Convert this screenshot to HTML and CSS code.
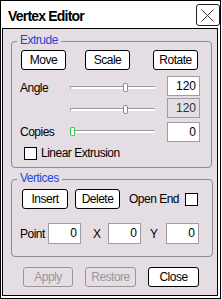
FILE: index.html
```html
<!DOCTYPE html>
<html>
<head>
<meta charset="utf-8">
<link rel="stylesheet" href="styles.css">
</head>
<body>
<div class="win">
  <div class="titlebar">
    <span class="title">Vertex Editor</span>
    <div class="xbtn">
      <svg width="22" height="20" viewBox="0 0 22 20"><path d="M4.5 4.5 L16.5 16.5 M16.5 4.5 L4.5 16.5" stroke="#333" stroke-width="1" fill="none"/></svg>
    </div>
  </div>
  <div class="client">
    <div class="group g1">
      <span class="legend">Extrude</span>
      <div class="btnrow">
        <div class="btn b-move">Move</div>
        <div class="btn b-scale">Scale</div>
        <div class="btn b-rotate">Rotate</div>
      </div>
      <div class="row r1">
        <span class="lbl">Angle</span>
        <div class="slider"><div class="track"></div><div class="thumb green" style="left:53px"></div></div>
        <div class="tb">120</div>
      </div>
      <div class="row r2">
        <span class="lbl"></span>
        <div class="slider"><div class="track"></div><div class="thumb" style="left:53px"></div></div>
        <div class="tb disabled">120</div>
      </div>
      <div class="row r3">
        <span class="lbl">Copies</span>
        <div class="slider"><div class="track"></div><div class="thumb green" style="left:0px"></div></div>
        <div class="tb">0</div>
      </div>
      <div class="chkrow">
        <div class="chk"></div>
        <span class="chklbl">Linear Extrusion</span>
      </div>
    </div>
    <div class="group g2">
      <span class="legend">Vertices</span>
      <div class="btnrow2">
        <div class="btn b-insert">Insert</div>
        <div class="btn b-delete">Delete</div>
        <span class="openend">Open End</span>
        <div class="chk"></div>
      </div>
      <div class="pointrow">
        <span class="plbl">Point</span>
        <div class="tb small">0</div>
        <span class="xlbl">X</span>
        <div class="tb small">0</div>
        <span class="ylbl">Y</span>
        <div class="tb small">0</div>
      </div>
    </div>
    <div class="footer">
      <div class="btn fbtn disabled">Apply</div>
      <div class="btn fbtn disabled">Restore</div>
      <div class="btn fbtn">Close</div>
    </div>
  </div>
</div>
</body>
</html>
```
FILE: styles.css
```css
html, body {
  margin: 0;
  padding: 0;
  background: #ffffff;
}
body {
  font-family: "Liberation Sans", Arial, sans-serif;
  font-size: 12px;
  letter-spacing: -0.5px;
  color: #000;
}
.win {
  width: 219px;
  height: 297px;
  border: 1px solid #000;
  background: #fff;
  display: flex;
  flex-direction: column;
}
.titlebar {
  height: 27px;
  display: flex;
  align-items: flex-start;
}
.title {
  font-size: 14px;
  font-weight: bold;
  letter-spacing: -0.8px;
  line-height: 20px;
  padding-top: 5px;
  padding-left: 7px;
}
.xbtn {
  margin-left: auto;
  margin-top: 3px;
  width: 22px;
  height: 20px;
  border: 1px solid #222;
  border-radius: 3px;
  background: #fff;
}
.xbtn svg { display: block; }
.client {
  margin: 0 2px 2px 1px;
  height: 266px;
  border: 1px solid #000;
  background: #e4dde4;
  display: flex;
  flex-direction: column;
}
.group {
  position: relative;
  border: 1px solid #8e8a8e;
  border-radius: 4px;
}
.g1 {
  margin: 12px 5px 0 8px;
  padding: 8px 11px 7px 8px;
}
.g2 {
  margin: 11px 4px 0 8px;
  padding: 9px 11px 12px 10px;
}
.legend {
  position: absolute;
  top: -8px;
  left: 5px;
  padding: 0 3px 0 3px;
  line-height: 13px;
  color: #1f45d6;
  background: #e4dde4;
}
.btn {
  box-sizing: border-box;
  height: 20px;
  border: 1px solid #000;
  border-radius: 3px;
  background: #fff;
  display: flex;
  align-items: center;
  justify-content: center;
  line-height: 13px;
}
.btn.disabled {
  border-color: #9a969a;
  color: #9a969a;
  background: #e4dde4;
}
.btnrow {
  display: flex;
  height: 20px;
}
.b-move { width: 45px; margin-left: 1px; }
.b-scale { width: 45px; margin-left: 19px; }
.b-rotate { width: 45px; margin-left: 23px; }
.row {
  display: flex;
  align-items: flex-start;
  height: 20px;
}
.r1 { margin-top: 6px; }
.r2 { margin-top: 2px; }
.r3 { margin-top: 4px; }
.lbl {
  width: 50px;
  line-height: 13px;
}
.r1 .lbl { margin-top: 6px; }
.r3 .lbl { margin-top: 4px; }
.slider {
  position: relative;
  width: 85px;
  height: 9px;
}
.r1 .slider { margin-top: 7px; }
.r2 .slider { margin-top: 7px; }
.r3 .slider { margin-top: 5px; }
.track {
  margin-top: 3px;
  height: 2px;
  background: #fff;
  border-top: 1px solid #9a9a9a;
  border-left: 1px solid #9a9a9a;
}
.thumb {
  position: absolute;
  top: 0;
  box-sizing: border-box;
  width: 5px;
  height: 9px;
  border: 1px solid #8a8a8a;
  border-radius: 2px;
  background: #fff;
}
.thumb.green {
  border-color: #3fbf3f;
  border-top-color: #8a8a8a;
}
.tb {
  box-sizing: border-box;
  margin-left: auto;
  width: 33px;
  height: 20px;
  border: 1px solid #a09ca0;
  background: #fff;
  text-align: right;
  padding-right: 3px;
  letter-spacing: 0;
  line-height: 18px;
}
.tb.disabled {
  background: #e4dde4;
  color: #333;
}
.chkrow {
  display: flex;
  align-items: center;
  margin-top: 5px;
  padding-left: 4px;
  height: 13px;
}
.chk {
  box-sizing: border-box;
  width: 13px;
  height: 13px;
  border: 1px solid #000;
  background: #fff;
}
.chklbl {
  margin-left: 4px;
  line-height: 13px;
}
.btnrow2 {
  display: flex;
  align-items: center;
  height: 20px;
}
.b-insert { width: 46px; }
.b-delete { width: 45px; margin-left: 7px; }
.openend {
  margin-left: 9px;
  line-height: 13px;
}
.btnrow2 .chk { margin-left: 6px; }
.pointrow {
  display: flex;
  align-items: center;
  margin-top: 14px;
  margin-left: -2px;
  height: 21px;
}
.pointrow .tb { margin-left: 0; height: 21px; line-height: 19px; width: 33px; }
.plbl { width: 28px; }
.xlbl { margin-left: 12px; width: 15px; }
.ylbl { margin-left: 9px; width: 16px; }
.footer {
  display: flex;
  margin-top: 10px;
  padding-left: 20px;
}
.fbtn {
  width: 51px;
}
.fbtn:first-child { width: 50px; }
.fbtn + .fbtn { margin-left: 12px; }
```
